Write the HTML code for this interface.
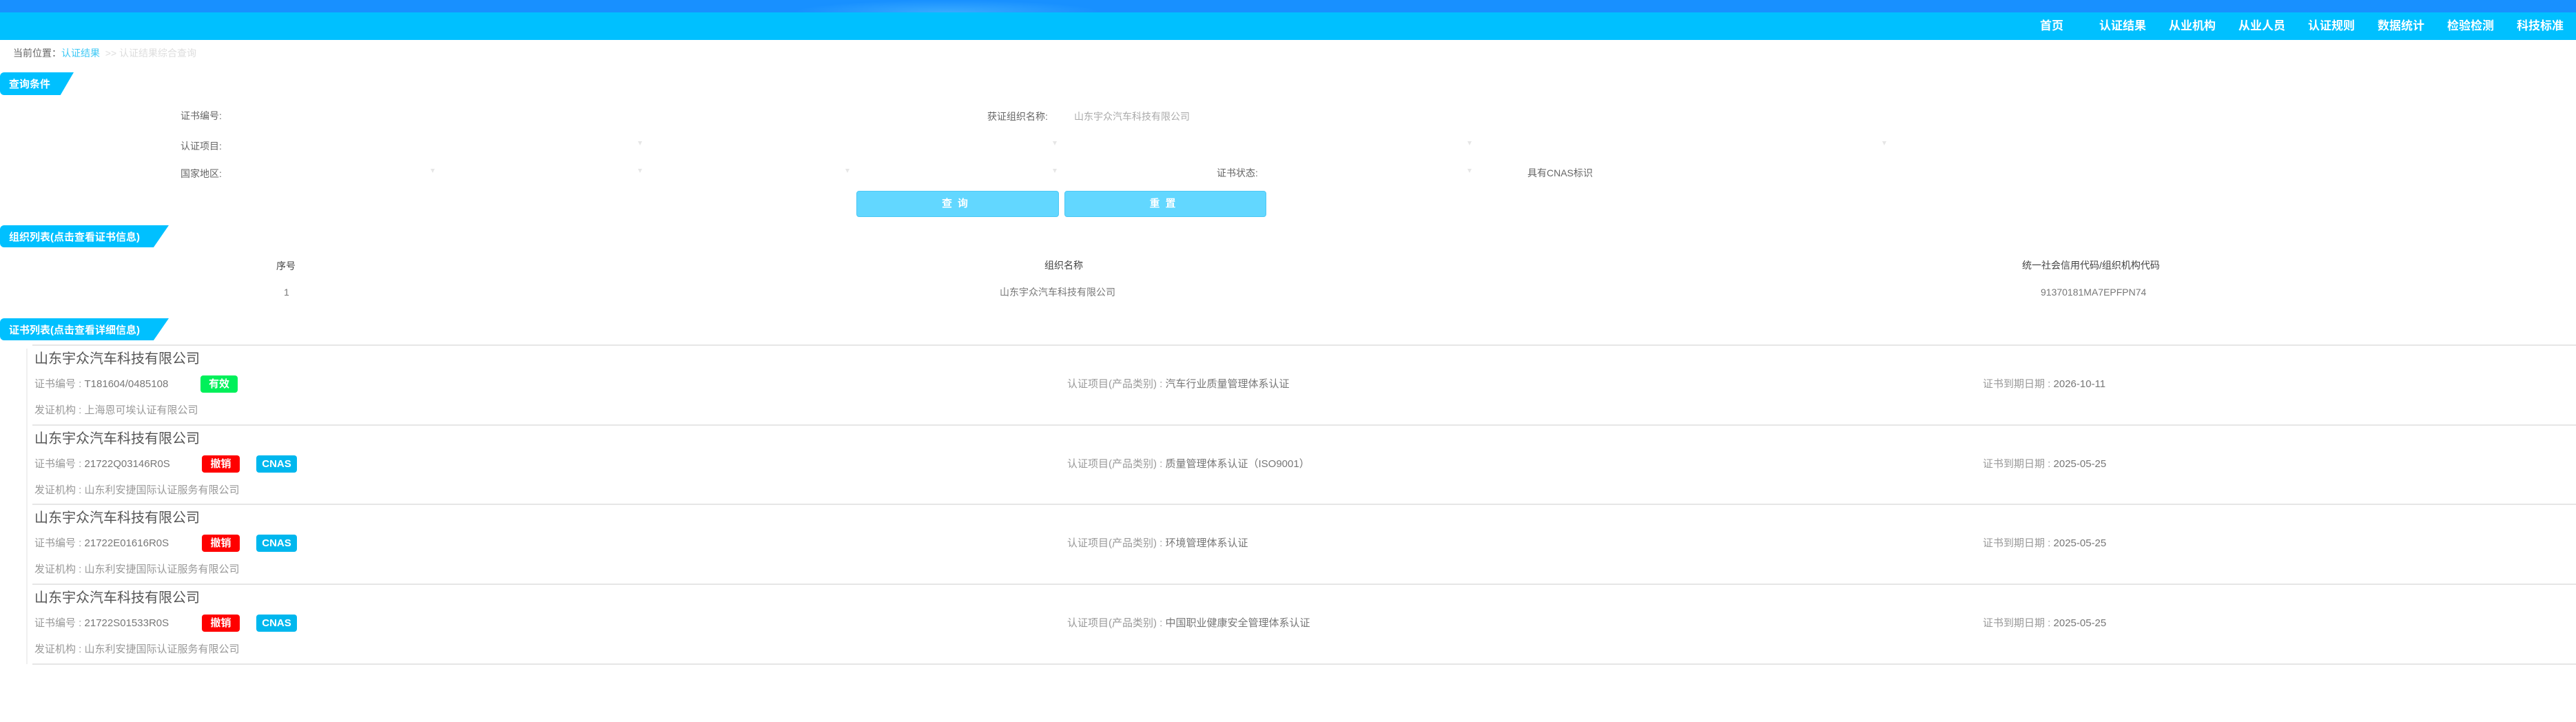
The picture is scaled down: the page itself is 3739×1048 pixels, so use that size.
<!DOCTYPE html>
<html><head><meta charset="utf-8"><style>
*{margin:0;padding:0;box-sizing:border-box}
body{width:3739px;height:1048px;position:relative;overflow:hidden;background:#fff;font-family:"Liberation Sans","Noto Sans CJK SC",sans-serif}
.a{position:absolute;white-space:nowrap;line-height:20px}
.top{position:absolute;left:0;top:0;width:3739px;height:18px;background:#1890ff}
.deco{position:absolute;left:1150px;top:0;width:450px;height:18px;background:radial-gradient(ellipse at 50% 100%,rgba(120,220,255,.35),rgba(24,144,255,0) 70%)}
.bar{position:absolute;left:0;top:18px;width:3739px;height:40px;background:#00c0ff}
.nav{color:#fff;font-weight:bold;font-size:17px;top:28px}
.tag{position:absolute;left:0;background:#00c0ff;color:#fff;font-weight:bold;font-size:15px;border-radius:6px 0 0 6px;padding-left:13px;display:flex;align-items:center}
.lbl{font-size:14px;color:#666}
.arr{position:absolute;width:0;height:0;border-left:3px solid transparent;border-right:3px solid transparent;border-top:6px solid #e6e6e6}
.btn{position:absolute;top:277px;height:38px;background:#62d7ff;border:1px solid #4cc8f5;border-radius:4px;color:#fff;font-weight:bold;font-size:15px;text-align:center;line-height:36px;letter-spacing:8px}
.th{font-size:14px;color:#444}
.td{font-size:14px;color:#777}
.line{position:absolute;left:47px;width:3692px;height:2px;background:#e6e6e6}
.title{font-size:20px;color:#555;left:50px;line-height:24px}
.sm{font-size:15px;color:#999}
.badge{position:absolute;height:25px;border-radius:4px;color:#fff;font-weight:bold;font-size:15px;text-align:center;line-height:25px}
</style></head><body>
<div class="top"></div><div class="deco"></div>
<div class="bar"></div>
<div class="a nav" style="left:2961px">首页</div>
<div class="a nav" style="left:3047px">认证结果</div>
<div class="a nav" style="left:3148px">从业机构</div>
<div class="a nav" style="left:3249px">从业人员</div>
<div class="a nav" style="left:3350px">认证规则</div>
<div class="a nav" style="left:3451px">数据统计</div>
<div class="a nav" style="left:3552px">检验检测</div>
<div class="a nav" style="left:3653px">科技标准</div>

<div class="a" style="left:19px;top:67px;font-size:14px;color:#666">当前位置：<span style="color:#3cc8f5">认证结果</span><span style="color:#ddd"> &nbsp;&gt;&gt; 认证结果综合查询</span></div>

<div class="tag" style="top:105px;height:33px;width:107px;clip-path:polygon(0 0,100% 0,82% 100%,0 100%)">查询条件</div>

<div class="a lbl" style="left:262px;top:158px">证书编号:</div>
<div class="a lbl" style="left:1433px;top:159px">获证组织名称:</div>
<div class="a" style="left:1559px;top:159px;font-size:14px;color:#aaa">山东宇众汽车科技有限公司</div>
<div class="a lbl" style="left:262px;top:202px">认证项目:</div>
<div class="a lbl" style="left:262px;top:242px">国家地区:</div>
<div class="a lbl" style="left:1766px;top:241px">证书状态:</div>
<div class="a lbl" style="left:2217px;top:241px">具有CNAS标识</div>
<div class="arr" style="left:926px;top:205px"></div>
<div class="arr" style="left:1528px;top:205px"></div>
<div class="arr" style="left:2130px;top:205px"></div>
<div class="arr" style="left:2732px;top:205px"></div>
<div class="arr" style="left:625px;top:245px"></div>
<div class="arr" style="left:926px;top:245px"></div>
<div class="arr" style="left:1227px;top:245px"></div>
<div class="arr" style="left:1528px;top:245px"></div>
<div class="arr" style="left:2130px;top:245px"></div>

<div class="btn" style="left:1243px;width:294px">查询</div>
<div class="btn" style="left:1545px;width:293px">重置</div>

<div class="tag" style="top:327px;height:32px;width:245px;clip-path:polygon(0 0,100% 0,91% 100%,0 100%)">组织列表(点击查看证书信息)</div>

<div class="a th" style="left:401px;top:376px">序号</div>
<div class="a th" style="left:1516px;top:375px">组织名称</div>
<div class="a th" style="left:2935px;top:375px">统一社会信用代码/组织机构代码</div>
<div class="a td" style="left:412px;top:414px">1</div>
<div class="a td" style="left:1451px;top:414px">山东宇众汽车科技有限公司</div>
<div class="a td" style="left:2962px;top:414px">91370181MA7EPFPN74</div>

<div class="tag" style="top:462px;height:32px;width:245px;clip-path:polygon(0 0,100% 0,91% 100%,0 100%)">证书列表(点击查看详细信息)</div>

<div style="position:absolute;left:38px;top:506px;width:2px;height:458px;background:#f0f0f0"></div>
<div class="line" style="top:500px"></div>
<div class="line" style="top:616px"></div>
<div class="line" style="top:731px"></div>
<div class="line" style="top:847px"></div>
<div class="line" style="top:963px"></div>

<div class="a title" style="top:509px">山东宇众汽车科技有限公司</div>
<div class="a sm" style="left:50px;top:548px">证书编号 : <span style="color:#777">T181604/0485108</span></div>
<div class="badge" style="left:291px;top:545px;width:54px;background:#00f05a">有效</div>
<div class="a sm" style="left:1549px;top:548px">认证项目(产品类别) : <span style="color:#777">汽车行业质量管理体系认证</span></div>
<div class="a sm" style="left:2878px;top:548px">证书到期日期 : <span style="color:#777">2026-10-11</span></div>
<div class="a sm" style="left:50px;top:586px">发证机构 : 上海恩可埃认证有限公司</div>

<div class="a title" style="top:625px">山东宇众汽车科技有限公司</div>
<div class="a sm" style="left:50px;top:664px">证书编号 : <span style="color:#777">21722Q03146R0S</span></div>
<div class="badge" style="left:293px;top:661px;width:55px;background:#f00">撤销</div>
<div class="badge" style="left:372px;top:661px;width:59px;background:#00b7ee">CNAS</div>
<div class="a sm" style="left:1549px;top:664px">认证项目(产品类别) : <span style="color:#777">质量管理体系认证（ISO9001）</span></div>
<div class="a sm" style="left:2878px;top:664px">证书到期日期 : <span style="color:#777">2025-05-25</span></div>
<div class="a sm" style="left:50px;top:702px">发证机构 : 山东利安捷国际认证服务有限公司</div>

<div class="a title" style="top:740px">山东宇众汽车科技有限公司</div>
<div class="a sm" style="left:50px;top:779px">证书编号 : <span style="color:#777">21722E01616R0S</span></div>
<div class="badge" style="left:293px;top:776px;width:55px;background:#f00">撤销</div>
<div class="badge" style="left:372px;top:776px;width:59px;background:#00b7ee">CNAS</div>
<div class="a sm" style="left:1549px;top:779px">认证项目(产品类别) : <span style="color:#777">环境管理体系认证</span></div>
<div class="a sm" style="left:2878px;top:779px">证书到期日期 : <span style="color:#777">2025-05-25</span></div>
<div class="a sm" style="left:50px;top:817px">发证机构 : 山东利安捷国际认证服务有限公司</div>

<div class="a title" style="top:856px">山东宇众汽车科技有限公司</div>
<div class="a sm" style="left:50px;top:895px">证书编号 : <span style="color:#777">21722S01533R0S</span></div>
<div class="badge" style="left:293px;top:892px;width:55px;background:#f00">撤销</div>
<div class="badge" style="left:372px;top:892px;width:59px;background:#00b7ee">CNAS</div>
<div class="a sm" style="left:1549px;top:895px">认证项目(产品类别) : <span style="color:#777">中国职业健康安全管理体系认证</span></div>
<div class="a sm" style="left:2878px;top:895px">证书到期日期 : <span style="color:#777">2025-05-25</span></div>
<div class="a sm" style="left:50px;top:933px">发证机构 : 山东利安捷国际认证服务有限公司</div>
</body></html>
